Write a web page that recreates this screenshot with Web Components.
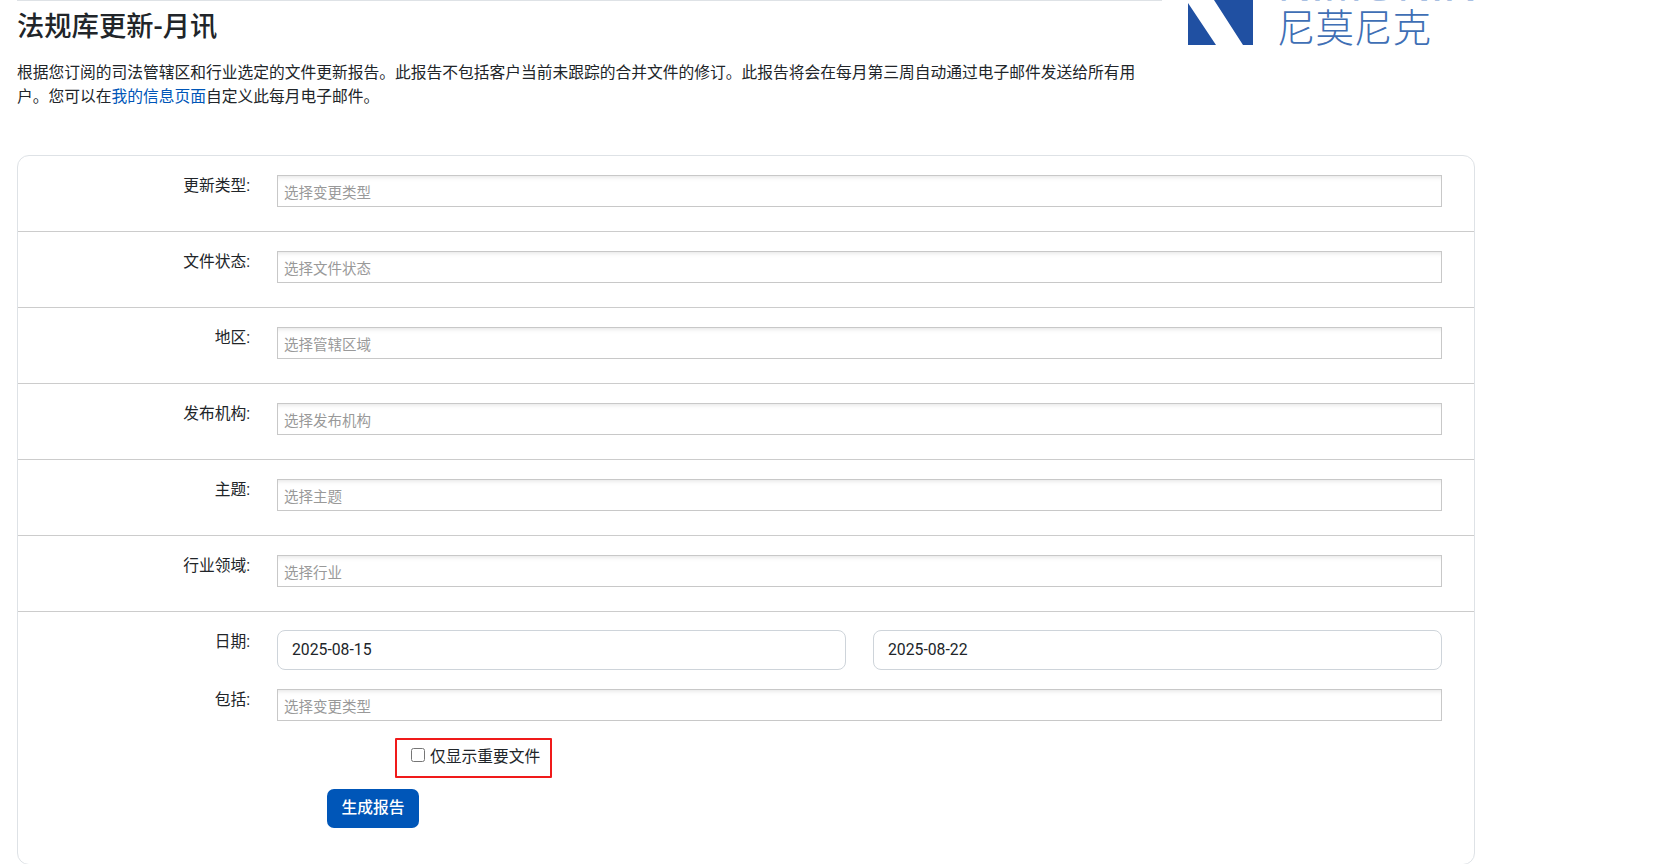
<!DOCTYPE html>
<html lang="zh-CN"><head><meta charset="utf-8">
<style>
html,body{margin:0;padding:0;background:#fff;overflow:hidden;height:864px}
body{font:15.75px/24px Roboto,"Noto Sans CJK SC",sans-serif;color:#212529}
</style></head><body>
<report-page>
  <page-header slot="header">
    <span slot="title">法规库更新-月讯</span>
    根据您订阅的司法管辖区和行业选定的文件更新报告。此报告不包括客户当前未跟踪的合并文件的修订。此报告将会在每月第三周自动通过电子邮件发送给所有用户。您可以在<a href="#" style="color:#0056b8;text-decoration:none">我的信息页面</a>自定义此每月电子邮件。
  </page-header>
  <form-card slot="card">
    <form-row label="更新类型:"><choice-box text="选择变更类型"></choice-box></form-row>
    <form-row label="文件状态:"><choice-box text="选择文件状态"></choice-box></form-row>
    <form-row label="地区:"><choice-box text="选择管辖区域"></choice-box></form-row>
    <form-row label="发布机构:"><choice-box text="选择发布机构"></choice-box></form-row>
    <form-row label="主题:"><choice-box text="选择主题"></choice-box></form-row>
    <form-row label="行业领域:"><choice-box text="选择行业"></choice-box></form-row>
    <report-options></report-options>
  </form-card>
</report-page>
<script>
function def(name,html,init){
  customElements.define(name,class extends HTMLElement{
    constructor(){super();const s=this.attachShadow({mode:'open'});s.innerHTML=html;}
    connectedCallback(){if(init)init(this,this.shadowRoot);}
  });
}
def('report-page',`<style>:host{display:block;padding:0 200px 0 17px}</style><slot name="header"></slot><slot name="card"></slot>`);
def('page-header',`<style>
:host{display:flex;height:155px}
.l{width:1145px;flex:none;border-top:1px solid #dee2e6;box-sizing:border-box}
h1{font:500 27.3px/32px Roboto,"Noto Sans CJK SC",sans-serif;margin:10px 0 18px;color:#212529}
p{margin:0;width:1125px}
svg{display:block;flex:none;margin-left:26px}
</style>
<div class="l"><h1><slot name="title"></slot></h1><p><slot></slot></p></div>
<svg width="287" height="50" viewBox="1188 0 287 50">
<path fill="#2050a2" d="M1188 3V45H1216ZM1214 0H1253V45H1243Z"/>
<text x="1277" y="42" font-family="Noto Sans CJK SC" font-weight="300" font-size="38.5" fill="#3f6fb5">尼莫尼克</text>
<text x="1278" y="0.6" font-family="Liberation Sans" font-size="44" fill="#a9c0e2" textLength="196" lengthAdjust="spacingAndGlyphs">NIMONIK</text>
</svg>`);
def('form-card',`<style>:host{display:block;border:1px solid #dee2e6;border-radius:12px;height:710px;box-sizing:border-box;overflow:hidden}</style><slot></slot>`);
def('form-row',`<style>
:host{display:grid;grid-template-columns:232px 1fr;column-gap:27px;padding:19px 32px 24px 0;border-bottom:1px solid #ccc;height:76px;box-sizing:border-box}
.lab{text-align:right;line-height:20px;padding-top:1px}
</style><div class="lab"></div><slot></slot>`,(h,s)=>{s.querySelector('.lab').textContent=h.getAttribute('label')});
def('choice-box',`<style>
:host{display:block;height:32px;box-sizing:border-box;border:1px solid #c8c8c8;box-shadow:inset 0 5px 5px -4px #e2e2e2;padding:5px 6px 0;font-size:14.5px;line-height:26px;color:#999}
</style><span></span>`,(h,s)=>{s.querySelector('span').textContent=h.getAttribute('text')});
def('date-box',`<style>
:host{display:block;height:40px;box-sizing:border-box;border:1px solid #ced4da;border-radius:8px;padding:7px 14px;line-height:24px;color:#212529}
</style><span></span>`,(h,s)=>{s.querySelector('span').textContent=h.getAttribute('value')});
def('report-options',`<style>
:host{display:block;padding:18px 32px 0 0}
.r{display:grid;grid-template-columns:232px 1fr;column-gap:27px}
.lab{text-align:right;line-height:20px;padding-top:1px}
.lab.d{padding-top:2px}
.dates{display:grid;grid-template-columns:1fr 1fr;gap:27px}
.inc{margin-top:19px}
.chk{display:flex;width:157px;box-sizing:border-box;height:40px;margin:17px 0 0 377px;padding:0 0 2px 14px;border:2px solid #f01a1a;border-radius:1px;align-items:center}
input{margin:0 5px 5px 0;width:14px;height:14px;flex:none}
button{display:block;margin:11px 0 0 309px;width:92px;height:39px;border:0;border-radius:7px;background:#0056b8;color:#fff;font:500 15.75px/24px Roboto,"Noto Sans CJK SC",sans-serif;padding:0 0 2px}
</style>
<div class="r"><div class="lab d">日期:</div><div class="dates"><date-box value="2025-08-15"></date-box><date-box value="2025-08-22"></date-box></div></div>
<div class="r inc"><div class="lab">包括:</div><choice-box text="选择变更类型"></choice-box></div>
<label class="chk"><input type="checkbox">仅显示重要文件</label>
<button type="button">生成报告</button>`);
</script>
</body></html>
